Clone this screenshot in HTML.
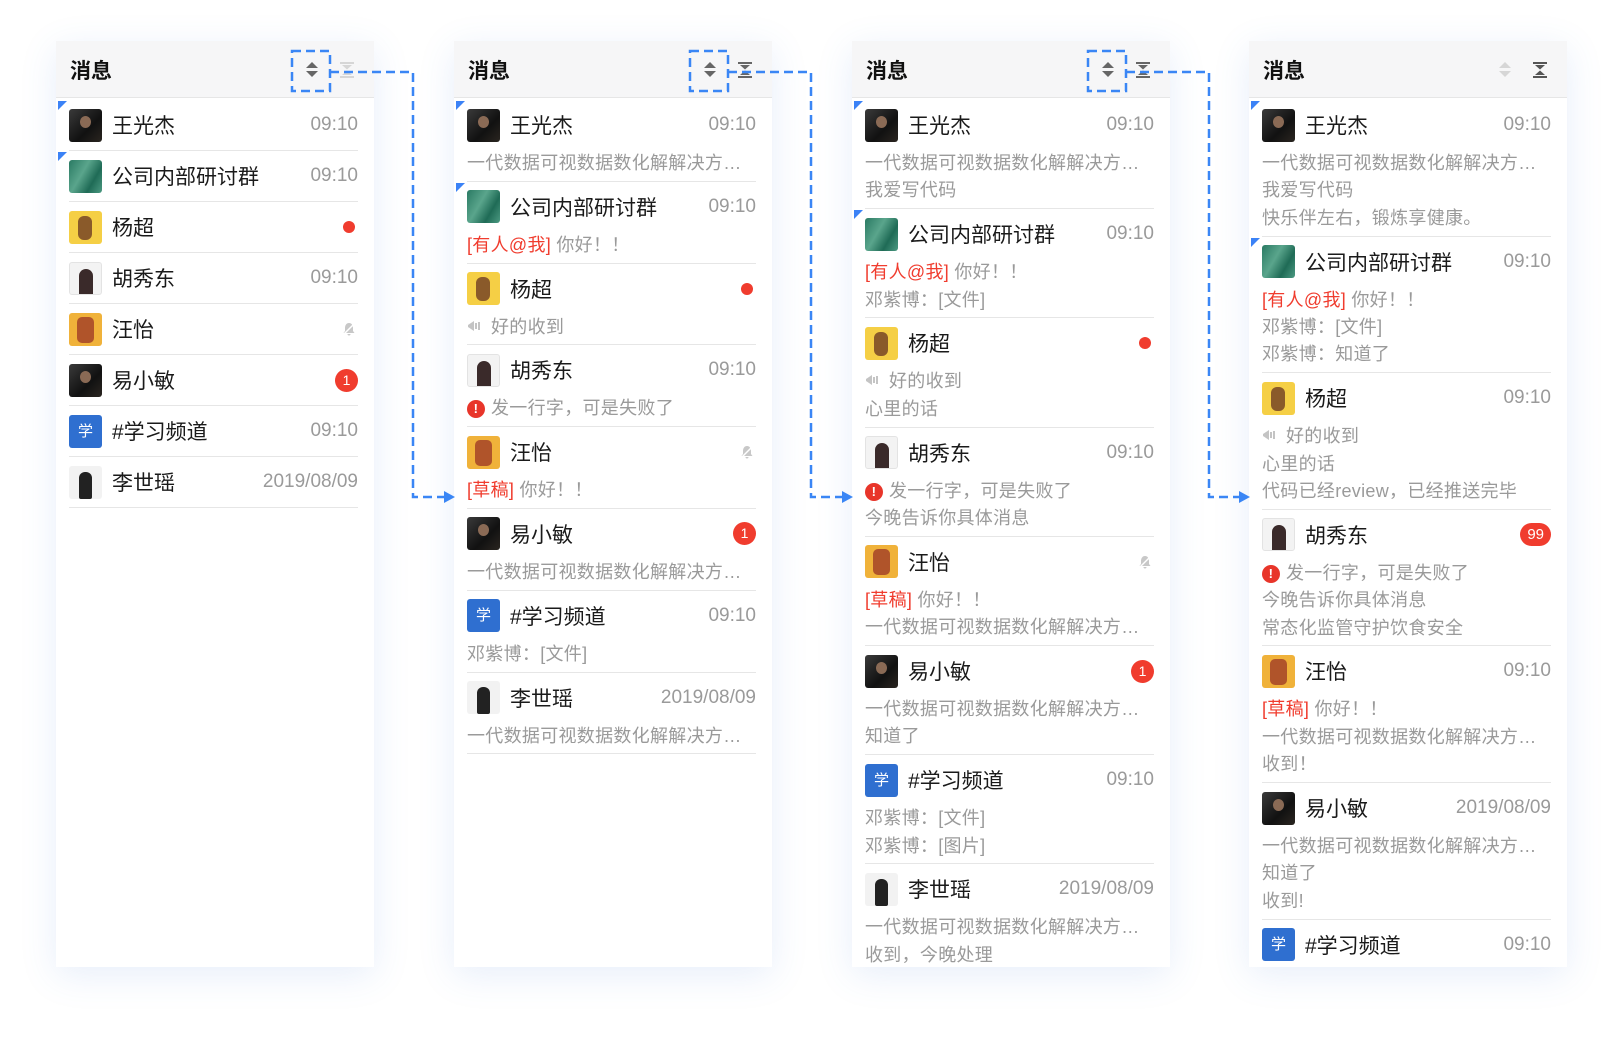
<!DOCTYPE html>
<html><head><meta charset="utf-8">
<style>
*{margin:0;padding:0;box-sizing:border-box}
body{width:1624px;height:1039px;background:#fff;position:relative;overflow:hidden;font-family:"Liberation Sans","Noto Sans CJK SC",sans-serif}
.panel{position:absolute;top:41px;width:318px;height:926px;background:#fff;overflow:hidden;box-shadow:0 8px 34px rgba(70,120,220,.13)}
.hd{height:57px;background:#f6f6f7;border-bottom:1px solid #e6e6e6;position:relative}
.hd b{position:absolute;left:14px;top:3px;line-height:56px;font-size:21px;color:#111}
.hd svg{position:absolute;top:21px}
.list{padding:2px 16px 0 13px}
.it{position:relative;border-bottom:1px solid #e6e6e6;padding-bottom:3.4px}
.it.s{padding-bottom:0}
.r{height:50px;display:flex;align-items:center}
.av{width:33px;height:33px;border-radius:3px;margin-right:10px;flex:none;position:relative;overflow:hidden}
.nm{font-size:21px;color:#1a1a1a;flex:1;white-space:nowrap}
.tm{font-size:19px;color:#9a9a9a}
.ln{font-size:18px;line-height:27.4px;color:#9a9a9a;white-space:nowrap;overflow:hidden;letter-spacing:.3px}
.red{color:#f03c2e}
.pin::before{content:"";position:absolute;left:-11px;top:1px;border-top:9px solid #3b82f6;border-right:9px solid transparent}
.dot{width:12px;height:12px;border-radius:50%;background:#f03c2e;margin-right:3px}
.bd{min-width:23px;height:23px;border-radius:12px;background:#f03c2e;color:#fff;font-size:14px;text-align:center;line-height:23px;padding:0 5px}
.err{display:inline-block;width:18px;height:18px;border-radius:50%;background:#e8352a;color:#fff;font-size:13px;line-height:18px;text-align:center;font-weight:bold;vertical-align:1px;margin-right:6px}
.snd{display:inline-block;width:24px;vertical-align:0}
.a1{background:linear-gradient(135deg,#3a3a3a,#111 60%,#2a2520)}
.a1::after{content:"";position:absolute;left:11px;top:7px;width:11px;height:12px;border-radius:50%;background:#8a6a55}
.a2{background:linear-gradient(120deg,#2a7a63,#5aa58c 40%,#1f6b56 70%,#4c9a82)}
.a3{background:#f5cf45}
.a3::after{content:"";position:absolute;left:9px;top:5px;width:14px;height:24px;border-radius:6px;background:#8a5a2a}
.a4{background:#f3f3f3;border:1px solid #e3e3e3}
.a4::after{content:"";position:absolute;left:9px;top:6px;width:14px;height:27px;border-radius:7px 7px 2px 2px;background:#3a2a2a}
.a5{background:#f0b23a}
.a5::after{content:"";position:absolute;left:8px;top:4px;width:17px;height:26px;border-radius:5px;background:#b0542a}
.a7{background:#2f6fd0;color:#fff;font-size:15px;text-align:center;line-height:33px}
.a8{background:#f2f2f2}
.a8::after{content:"";position:absolute;left:10px;top:6px;width:13px;height:27px;border-radius:6px 6px 2px 2px;background:#222}
.mute{width:14px;height:14px;margin-right:2px}
</style></head><body>

<svg width="0" height="0" style="position:absolute"><defs>
<g id="sort"><path d="M7 0L13 6H1Z"/><path d="M1 9H13L7 15Z"/></g>
<g id="col"><rect x="0" y="0" width="14" height="2"/><path d="M2 3H12L7 7.5Z"/><path d="M7 8.5L12 13H2Z"/><rect x="0" y="14" width="14" height="2"/></g>
<g id="mt"><path d="M7 1C4 1 3 4 3 6V9L1.5 11H12.5L11 9V6C11 4 10 1 7 1ZM5.5 12A1.5 1.5 0 0 0 8.5 12Z" fill="#c8c8c8"/><path d="M1 13L13 1" stroke="#fff" stroke-width="1.5"/></g>
<g id="sp"><path d="M1 6L7 2V12L1 8Z" fill="#c4c4c4"/><rect x="8" y="4" width="2" height="6" fill="#c4c4c4"/><rect x="11" y="3" width="2" height="8" fill="#c4c4c4"/></g>
</defs></svg>

<!-- PANEL 1 -->
<div class="panel" style="left:56px">
<div class="hd"><b>消息</b>
<svg style="left:249px" width="14" height="16" fill="#666"><use href="#sort"/></svg>
<svg style="left:284px" width="14" height="16" fill="#d6d6d6"><use href="#col"/></svg></div>
<div class="list">
<div class="it s pin"><div class="r"><div class="av a1"></div><div class="nm">王光杰</div><div class="tm">09:10</div></div></div>
<div class="it s pin"><div class="r"><div class="av a2"></div><div class="nm">公司内部研讨群</div><div class="tm">09:10</div></div></div>
<div class="it s"><div class="r"><div class="av a3"></div><div class="nm">杨超</div><div class="dot"></div></div></div>
<div class="it s"><div class="r"><div class="av a4"></div><div class="nm">胡秀东</div><div class="tm">09:10</div></div></div>
<div class="it s"><div class="r"><div class="av a5"></div><div class="nm">汪怡</div><svg class="mute" viewBox="0 0 14 14"><use href="#mt"/></svg></div></div>
<div class="it s"><div class="r"><div class="av a1"></div><div class="nm">易小敏</div><div class="bd">1</div></div></div>
<div class="it s"><div class="r"><div class="av a7">学</div><div class="nm">#学习频道</div><div class="tm">09:10</div></div></div>
<div class="it s"><div class="r"><div class="av a8"></div><div class="nm">李世瑶</div><div class="tm">2019/08/09</div></div></div>
</div></div>

<!-- PANEL 2 -->
<div class="panel" style="left:454px">
<div class="hd"><b>消息</b>
<svg style="left:249px" width="14" height="16" fill="#666"><use href="#sort"/></svg>
<svg style="left:284px" width="14" height="16" fill="#666"><use href="#col"/></svg></div>
<div class="list">
<div class="it pin"><div class="r"><div class="av a1"></div><div class="nm">王光杰</div><div class="tm">09:10</div></div><div class="ln">一代数据可视数据数化解解决方…</div></div>
<div class="it pin"><div class="r"><div class="av a2"></div><div class="nm">公司内部研讨群</div><div class="tm">09:10</div></div><div class="ln"><span class="red">[有人@我]</span> 你好！！</div></div>
<div class="it"><div class="r"><div class="av a3"></div><div class="nm">杨超</div><div class="dot"></div></div><div class="ln"><svg class="snd" width="24" height="14" viewBox="0 0 24 14"><use href="#sp"/></svg>好的收到</div></div>
<div class="it"><div class="r"><div class="av a4"></div><div class="nm">胡秀东</div><div class="tm">09:10</div></div><div class="ln"><span class="err">!</span>发一行字，可是失败了</div></div>
<div class="it"><div class="r"><div class="av a5"></div><div class="nm">汪怡</div><svg class="mute" viewBox="0 0 14 14"><use href="#mt"/></svg></div><div class="ln"><span class="red">[草稿]</span> 你好！！</div></div>
<div class="it"><div class="r"><div class="av a1"></div><div class="nm">易小敏</div><div class="bd">1</div></div><div class="ln">一代数据可视数据数化解解决方…</div></div>
<div class="it"><div class="r"><div class="av a7">学</div><div class="nm">#学习频道</div><div class="tm">09:10</div></div><div class="ln">邓紫博：[文件]</div></div>
<div class="it"><div class="r"><div class="av a8"></div><div class="nm">李世瑶</div><div class="tm">2019/08/09</div></div><div class="ln">一代数据可视数据数化解解决方…</div></div>
</div></div>

<!-- PANEL 3 -->
<div class="panel" style="left:852px">
<div class="hd"><b>消息</b>
<svg style="left:249px" width="14" height="16" fill="#666"><use href="#sort"/></svg>
<svg style="left:284px" width="14" height="16" fill="#666"><use href="#col"/></svg></div>
<div class="list">
<div class="it pin"><div class="r"><div class="av a1"></div><div class="nm">王光杰</div><div class="tm">09:10</div></div><div class="ln">一代数据可视数据数化解解决方…</div><div class="ln">我爱写代码</div></div>
<div class="it pin"><div class="r"><div class="av a2"></div><div class="nm">公司内部研讨群</div><div class="tm">09:10</div></div><div class="ln"><span class="red">[有人@我]</span> 你好！！</div><div class="ln">邓紫博：[文件]</div></div>
<div class="it"><div class="r"><div class="av a3"></div><div class="nm">杨超</div><div class="dot"></div></div><div class="ln"><svg class="snd" width="24" height="14" viewBox="0 0 24 14"><use href="#sp"/></svg>好的收到</div><div class="ln">心里的话</div></div>
<div class="it"><div class="r"><div class="av a4"></div><div class="nm">胡秀东</div><div class="tm">09:10</div></div><div class="ln"><span class="err">!</span>发一行字，可是失败了</div><div class="ln">今晚告诉你具体消息</div></div>
<div class="it"><div class="r"><div class="av a5"></div><div class="nm">汪怡</div><svg class="mute" viewBox="0 0 14 14"><use href="#mt"/></svg></div><div class="ln"><span class="red">[草稿]</span> 你好！！</div><div class="ln">一代数据可视数据数化解解决方…</div></div>
<div class="it"><div class="r"><div class="av a1"></div><div class="nm">易小敏</div><div class="bd">1</div></div><div class="ln">一代数据可视数据数化解解决方…</div><div class="ln">知道了</div></div>
<div class="it"><div class="r"><div class="av a7">学</div><div class="nm">#学习频道</div><div class="tm">09:10</div></div><div class="ln">邓紫博：[文件]</div><div class="ln">邓紫博：[图片]</div></div>
<div class="it"><div class="r"><div class="av a8"></div><div class="nm">李世瑶</div><div class="tm">2019/08/09</div></div><div class="ln">一代数据可视数据数化解解决方…</div><div class="ln">收到，今晚处理</div></div>
</div></div>

<!-- PANEL 4 -->
<div class="panel" style="left:1249px">
<div class="hd"><b>消息</b>
<svg style="left:249px" width="14" height="16" fill="#d6d6d6"><use href="#sort"/></svg>
<svg style="left:284px" width="14" height="16" fill="#555"><use href="#col"/></svg></div>
<div class="list">
<div class="it pin"><div class="r"><div class="av a1"></div><div class="nm">王光杰</div><div class="tm">09:10</div></div><div class="ln">一代数据可视数据数化解解决方…</div><div class="ln">我爱写代码</div><div class="ln">快乐伴左右，锻炼享健康。</div></div>
<div class="it pin"><div class="r"><div class="av a2"></div><div class="nm">公司内部研讨群</div><div class="tm">09:10</div></div><div class="ln"><span class="red">[有人@我]</span> 你好！！</div><div class="ln">邓紫博：[文件]</div><div class="ln">邓紫博：知道了</div></div>
<div class="it"><div class="r"><div class="av a3"></div><div class="nm">杨超</div><div class="tm">09:10</div></div><div class="ln"><svg class="snd" width="24" height="14" viewBox="0 0 24 14"><use href="#sp"/></svg>好的收到</div><div class="ln">心里的话</div><div class="ln">代码已经review，已经推送完毕</div></div>
<div class="it"><div class="r"><div class="av a4"></div><div class="nm">胡秀东</div><div class="bd" style="font-size:15px;padding:0 7px">99</div></div><div class="ln"><span class="err">!</span>发一行字，可是失败了</div><div class="ln">今晚告诉你具体消息</div><div class="ln">常态化监管守护饮食安全</div></div>
<div class="it"><div class="r"><div class="av a5"></div><div class="nm">汪怡</div><div class="tm">09:10</div></div><div class="ln"><span class="red">[草稿]</span> 你好！！</div><div class="ln">一代数据可视数据数化解解决方…</div><div class="ln">收到！</div></div>
<div class="it"><div class="r"><div class="av a1"></div><div class="nm">易小敏</div><div class="tm">2019/08/09</div></div><div class="ln">一代数据可视数据数化解解决方…</div><div class="ln">知道了</div><div class="ln">收到!</div></div>
<div class="it s" style="border:none"><div class="r"><div class="av a7">学</div><div class="nm">#学习频道</div><div class="tm">09:10</div></div></div>
</div></div>

<!-- connectors -->
<svg style="position:absolute;left:0;top:0" width="1624" height="1039" fill="none">
<g stroke="#3a86f5" stroke-width="2.5" stroke-dasharray="9 5">
<rect x="292" y="51" width="38" height="40"/>
<path d="M330 72H413V497H446"/>
<rect x="690" y="51" width="38" height="40"/>
<path d="M728 72H811V497H844"/>
<rect x="1088" y="51" width="38" height="40"/>
<path d="M1126 72H1209V497H1241"/>
</g>
<g fill="#3a86f5">
<path d="M444 491L455 497L444 503Z"/>
<path d="M842 491L853 497L842 503Z"/>
<path d="M1239 491L1250 497L1239 503Z"/>
</g>
</svg>
</body></html>
